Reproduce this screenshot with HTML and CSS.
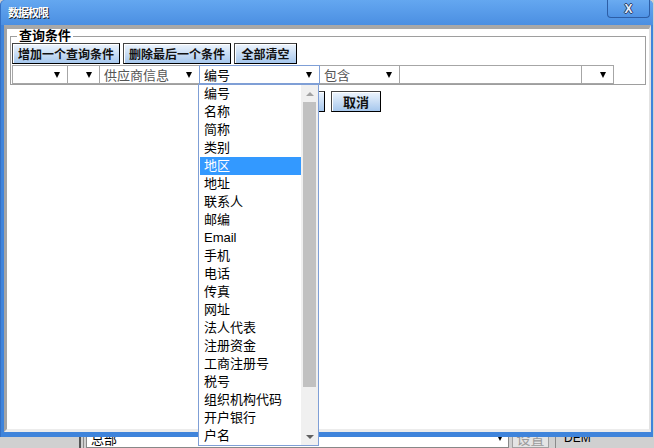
FILE: index.html
```html
<!DOCTYPE html>
<html lang="zh-CN">
    <head>
        <meta charset="utf-8" />
        <title>数据权限</title>
        <link rel="stylesheet" href="styles.css">
    </head>
    <body>
        <div class="window">
            <div class="titlebar">
                <span class="title">数据权限</span>
                <span class="closeBtn">X</span>
            </div>
            <div class="frame">
                <div class="client">
                    <fieldset class="query">
                        <legend>查询条件</legend>
                        <div class="toolbar">
                            <span class="btn addBtn">增加一个查询条件</span>
                            <span class="btn delBtn">删除最后一个条件</span>
                            <span class="btn clearBtn">全部清空</span>
                        </div>
                        <div class="condRow">
                            <span class="combo c1"><span class="val"></span><i class="arrow"></i></span>
                            <span class="combo c2"><span class="val"></span><i class="arrow"></i></span>
                            <span class="combo c3"><span class="val grey">供应商信息</span><i class="arrow"></i></span>
                            <span class="combo c4 focused"><span class="val">编号</span><i class="arrow"></i></span>
                            <span class="combo c5"><span class="val grey">包含</span><i class="arrow"></i></span>
                            <span class="combo c6"><span class="val"></span></span>
                            <span class="combo c7"><span class="val"></span><i class="arrow"></i></span>
                        </div>
                    </fieldset>
                    <div class="actions">
                        <span class="btn okBtn">确定</span>
                        <span class="btn cancelBtn">取消</span>
                    </div>
                </div>
            </div>
        </div>

        <div class="backRow">
            <div class="backInner">
                <span class="pad"></span>
                <span class="vline dark"></span>
                <span class="vline light"></span>
                <span class="backCombo"><span>总部</span><i class="arrow"></i></span>
                <span class="backBtn">设置</span>
                <span class="vline light sep"></span>
                <span class="backText">DEM</span>
            </div>
        </div>

        <div class="dropList">
            <div class="items">
                <div class="item">编号</div>
                <div class="item">名称</div>
                <div class="item">简称</div>
                <div class="item">类别</div>
                <div class="item selected">地区</div>
                <div class="item">地址</div>
                <div class="item">联系人</div>
                <div class="item">邮编</div>
                <div class="item">Email</div>
                <div class="item">手机</div>
                <div class="item">电话</div>
                <div class="item">传真</div>
                <div class="item">网址</div>
                <div class="item">法人代表</div>
                <div class="item">注册资金</div>
                <div class="item">工商注册号</div>
                <div class="item">税号</div>
                <div class="item">组织机构代码</div>
                <div class="item">开户银行</div>
                <div class="item">户名</div>
            </div>
            <div class="scrollbar">
                <span class="sbBtn"><i class="upArrow"></i></span>
                <span class="thumb"></span>
                <span class="sbTrack"></span>
                <span class="sbBtn"><i class="downArrow"></i></span>
            </div>
        </div>
    </body>
</html>
```
FILE: styles.css
```css
* {
    box-sizing: border-box;
}

html, body {
    margin: 0;
}

body {
    position: relative;
    width: 654px;
    height: 448px;
    overflow: hidden;
    background-color: #d0d0d0;
    font-family: "Liberation Sans", "Noto Sans CJK SC", sans-serif;
    font-size: 13px;
    color: #000;
}

/* window */
.window {
    width: 653px;
    height: 437px;
    display: flex;
    flex-direction: column;
    background-color: #3f84db;
    border-radius: 5px 5px 0 0;
    border-left: 1px solid #3470c4;
}

.titlebar {
    height: 25px;
    display: flex;
    align-items: center;
    justify-content: space-between;
    padding-left: 7px;
    background: linear-gradient(#64a7f0, #4b8fe2);
    border-radius: 5px 5px 0 0;
}

.title {
    color: #fff;
    font-weight: bold;
    font-size: 11px;
    letter-spacing: -1px;
    text-shadow: 1px 1px 0 #1c1c1c;
    margin-top: -1px;
}

.closeBtn {
    align-self: flex-start;
    width: 43px;
    height: 18px;
    margin-right: 3px;
    margin-top: 0;
    display: flex;
    align-items: center;
    justify-content: center;
    border: 1px solid #2d5ea6;
    border-top: 0;
    border-radius: 0 0 4px 4px;
    background: linear-gradient(#6aabf1, #4f93e5);
    color: #e6eefa;
    font-weight: bold;
    font-size: 12px;
    text-shadow: 1px 0 0 #2a3f66, -1px 0 0 #2a3f66, 0 1px 0 #2a3f66, 0 -1px 0 #2a3f66;
}

.frame {
    flex: 1;
    display: flex;
    padding: 0 2px 5px 3px;
}

.client {
    flex: 1;
    background-color: #fff;
    border-top: 4px solid #a8a8a8;
    border-left: 3px solid #a4a4a4;
    border-right: 2px solid #e2e2e2;
    border-bottom: 3px solid #ececec;
}

/* query box */
.query {
    margin: 0 3px;
    padding: 0 1px;
    border: 1px solid #9e9e9e;
}

.query legend {
    margin-left: 5px;
    padding: 0 2px;
    font-weight: bold;
    font-size: 13px;
    line-height: 14px;
}

.toolbar {
    display: flex;
    gap: 3px;
    height: 22px;
}

.btn {
    height: 21px;
    display: flex;
    align-items: center;
    justify-content: center;
    font-weight: bold;
    font-size: 12px;
    color: #111;
    background: linear-gradient(#eef5fd, #a6c7ed);
    border: 1px solid #444;
    border-right-color: #000;
    border-bottom-color: #000;
    box-shadow: inset 1px 1px 0 #fff;
}

.addBtn, .delBtn {
    width: 108px;
}

.clearBtn {
    width: 63px;
}

.condRow {
    display: flex;
    height: 19px;
}

.combo {
    position: relative;
    height: 19px;
    display: flex;
    align-items: center;
    justify-content: space-between;
    padding: 0 7px 0 4px;
    margin-right: -1px;
    border: 1px solid #a6a6a6;
    background-color: #fff;
    font-size: 13px;
}

.combo .grey {
    color: #555;
}

.combo.focused {
    z-index: 1;
    border-color: #7f9fd6;
}

.c1 { width: 56px; }
.c2 { width: 33px; }
.c3 { width: 101px; }
.c4 { width: 121px; }
.c5 { width: 81px; }
.c6 { width: 183px; }
.c7 { width: 33px; }

.arrow {
    width: 0;
    height: 0;
    border-left: 3px solid transparent;
    border-right: 3px solid transparent;
    border-top: 6px solid #000;
}

.actions {
    display: flex;
    justify-content: center;
    gap: 6px;
    margin-top: 6px;
}

.okBtn, .cancelBtn {
    width: 50px;
    height: 21px;
    font-size: 13px;
}

/* dropdown list over the page */
.dropList {
    position: absolute;
    left: 198px;
    top: 84px;
    width: 121px;
    height: 362px;
    display: flex;
    background-color: #fff;
    border: 1px solid #7f9fd6;
    z-index: 5;
}

.items {
    flex: 1;
    padding-left: 1px;
}

.item {
    height: 18px;
    line-height: 18px;
    padding-left: 4px;
    font-size: 13px;
    white-space: nowrap;
}

.item.selected {
    background-color: #3399ff;
    color: #fff;
}

.scrollbar {
    width: 17px;
    display: flex;
    flex-direction: column;
    background-color: #f0f0f0;
}

.sbBtn {
    height: 17px;
    display: flex;
    align-items: center;
    justify-content: center;
}

.thumb {
    height: 285px;
    margin: 0 2px;
    background-color: #c1c1c1;
}

.sbTrack {
    flex: 1;
}

.upArrow {
    border-left: 4px solid transparent;
    border-right: 4px solid transparent;
    border-bottom: 4px solid #a3a3a3;
}

.downArrow {
    border-left: 4px solid transparent;
    border-right: 4px solid transparent;
    border-top: 4px solid #606060;
}

/* page behind the window */
.backRow {
    height: 11px;
    overflow: hidden;
    background-color: #d0d0d0;
}

.backInner {
    display: flex;
    align-items: center;
    height: 20px;
    margin-top: -9px;
}

.pad {
    width: 79px;
}

.vline {
    width: 2px;
    height: 20px;
}

.vline.dark {
    background-color: #555;
    margin-right: 2px;
}

.vline.light {
    width: 1px;
    background-color: #8a8a8a;
    margin-right: 2px;
}

.backCombo {
    width: 423px;
    height: 20px;
    display: flex;
    align-items: center;
    justify-content: space-between;
    padding: 0 5px 0 4px;
    background-color: #fff;
    border: 1px solid #888;
}

.backBtn {
    width: 37px;
    height: 20px;
    margin-left: 3px;
    display: flex;
    align-items: center;
    justify-content: center;
    color: #9a9a9a;
    font-size: 14px;
    background-color: #e4e4e4;
    border: 1px solid #a0a0a0;
}

.sep {
    margin-left: 6px;
}

.backText {
    margin-left: 6px;
    font-size: 12px;
}
```
